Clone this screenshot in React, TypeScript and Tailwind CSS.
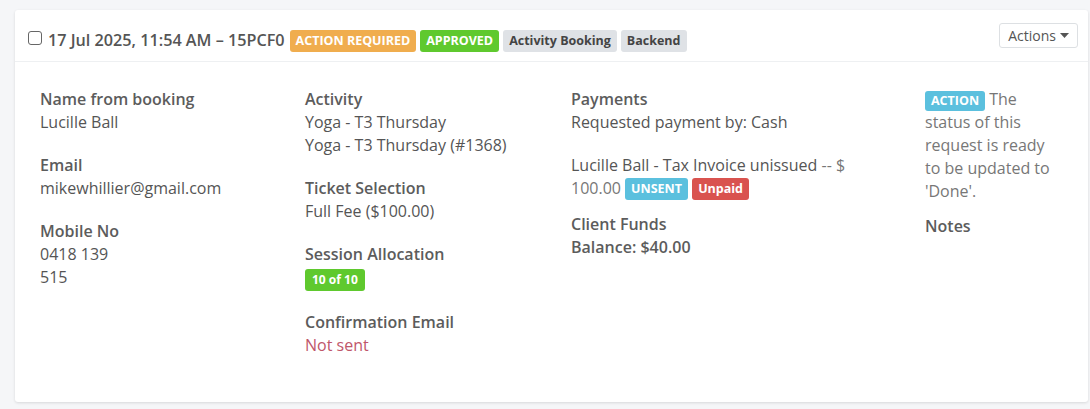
import React from 'react';

function Badge({ className, children }: { className: string; children: React.ReactNode }) {
  return (
    <span className={`inline-block rounded-[3px] px-[6px] py-[2px] text-[12.5px] font-bold leading-[18px] ${className}`}>
      {children}
    </span>
  );
}

function Field({ label, children }: { label: string; children: React.ReactNode }) {
  return (
    <div className="mb-[20px]">
      <div className="font-semibold text-[#5c5c5c]">{label}</div>
      {children}
    </div>
  );
}

export default function App() {
  return (
    <div
      className="min-h-[409px] bg-[#f5f6f8] pt-[10px] pl-[15px] pr-[2px] text-[16px] leading-[23px] text-[#555]"
      style={{ fontFamily: '"Open Sans", "Noto Sans", sans-serif' }}
    >
      <div className="h-[392px] rounded-[3px] bg-white shadow-[0_1px_3px_rgba(0,0,0,0.12)]">
        {/* Header */}
        <div className="flex h-[52px] items-start justify-between border-b border-[#eef0f2] pl-[13px] pr-[10px]">
          <div className="mt-[19px] flex items-center gap-[4px]">
            <span className="mr-[2px] mt-[-6px] inline-block h-[14px] w-[14px] rounded-[3px] border border-[#666] bg-white" />
            <span className="text-[16.2px] font-semibold text-[#555]">17 Jul 2025, 11:54 AM – 15PCF0</span>
            <Badge className="ml-[1px] bg-[#f0ad4e] text-white">ACTION REQUIRED</Badge>
            <Badge className="bg-[#5fc92e] text-white">APPROVED</Badge>
            <Badge className="bg-[#dfe2e6] text-[#444]">Activity Booking</Badge>
            <Badge className="bg-[#dfe2e6] text-[#444]">Backend</Badge>
          </div>
          <button className="mt-[13px] flex h-[25px] items-center gap-[4px] rounded-[3px] border border-[#dde0e3] bg-white px-[8px] text-[14px] text-[#555]">
            Actions
            <svg width="9" height="5" viewBox="0 0 9 5">
              <path d="M0 0h9L4.5 5z" fill="#555" />
            </svg>
          </button>
        </div>

        {/* Body */}
        <div className="grid grid-cols-[265px_266px_354px_1fr] pl-[25px] pt-[26px]">
          <div>
            <Field label="Name from booking">
              <div>Lucille Ball</div>
            </Field>
            <Field label="Email">
              <div>mikewhillier@gmail.com</div>
            </Field>
            <Field label="Mobile No">
              <div className="w-[80px]">0418 139 515</div>
            </Field>
          </div>

          <div>
            <Field label="Activity">
              <div>Yoga - T3 Thursday</div>
              <div>Yoga - T3 Thursday (#1368)</div>
            </Field>
            <Field label="Ticket Selection">
              <div>Full Fee ($100.00)</div>
            </Field>
            <Field label="Session Allocation">
              <div className="mt-[1px]">
                <span className="inline-block rounded-[3px] bg-[#5fc92e] px-[7px] text-[12px] font-bold leading-[22px] text-white">
                  10 of 10
                </span>
              </div>
            </Field>
            <Field label="Confirmation Email">
              <div className="text-[#c0566a]">Not sent</div>
            </Field>
          </div>

          <div>
            <div className="mb-[20px]">
              <div className="font-semibold text-[#5c5c5c]">Payments</div>
              <div>Requested payment by: Cash</div>
            </div>
            <div className="mb-[13px] w-[290px]">
              Lucille Ball - Tax Invoice unissued <span className="text-[#777]">-- $</span>{' '}
              <span className="text-[#777]">100.00</span>{' '}
              <span className="inline-block rounded-[3px] bg-[#5bc0de] px-[6px] text-[12.5px] font-bold leading-[22px] text-white align-[1px]">
                UNSENT
              </span>{' '}
              <span className="inline-block rounded-[3px] bg-[#d9534f] px-[6px] text-[12.5px] font-bold leading-[22px] text-white align-[1px]">
                Unpaid
              </span>
            </div>
            <div className="font-semibold text-[#5c5c5c]">Client Funds</div>
            <div className="font-semibold text-[#5c5c5c]">Balance: $40.00</div>
          </div>

          <div className="pr-[15px]">
            <div className="mb-[12px] w-[135px] text-[#777]">
              <span className="inline-block rounded-[3px] bg-[#5bc0de] px-[6px] text-[12.5px] font-bold leading-[20px] text-white">
                ACTION
              </span>{' '}
              The status of this request is ready to be updated to 'Done'.
            </div>
            <div className="font-semibold text-[#5c5c5c]">Notes</div>
          </div>
        </div>
      </div>
    </div>
  );
}
